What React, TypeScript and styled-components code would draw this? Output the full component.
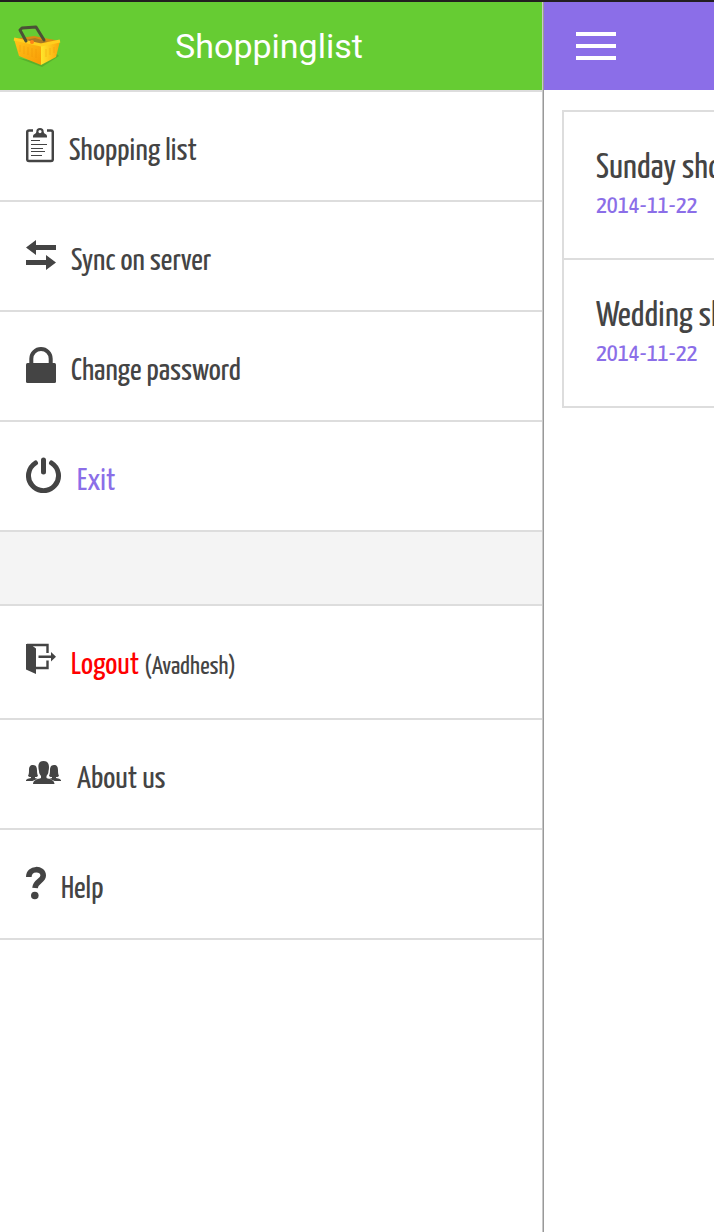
import React from "react";
import styled, { createGlobalStyle } from "styled-components";

const GlobalStyle = createGlobalStyle`
  * { box-sizing: border-box; }
  html, body, #root { height: 100%; }
  body {
    margin: 0;
    background: #fff;
    color: #444;
    font-family: "Yanone Kaffeesatz", Lato, sans-serif;
    overflow-x: hidden;
  }
`;

const Page = styled.div`
  display: grid;
  grid-template-columns: minmax(0, 16fr) minmax(0, 5fr);
  min-height: 100%;
  border-top: 2px solid #221f20;
`;

const Drawer = styled.aside`
  border-right: 1px solid #999;
  box-shadow: inset -1px 0 0 #c8c8c8;
  padding-right: 1px;
`;

const DrawerHeader = styled.header`
  display: grid;
  grid-template-columns: 52px 1fr 56px;
  align-items: center;
  height: 90px;
  padding: 0 10px;
  background: #66cc33;
  border-bottom: 2px solid #ddd;
`;

const Title = styled.h1`
  margin: 0;
  color: #fff;
  font-family: Roboto, sans-serif;
  font-size: 34px;
  font-weight: 400;
  line-height: 40px;
  text-align: center;
`;

const Menu = styled.ul`
  list-style: none;
  margin: 0;
  padding: 0;
`;

const MenuItem = styled.li`
  border-bottom: 2px solid #ddd;
`;

const Separator = styled.li`
  height: 74px;
  background: #f4f4f4;
  border-bottom: 2px solid #ddd;
`;

const MenuLink = styled.a<{ $color?: string; $tall?: boolean }>`
  display: flex;
  align-items: flex-start;
  gap: 15px;
  height: ${(p) => (p.$tall ? 112 : 108)}px;
  padding: 35px 26px;
  color: ${(p) => p.$color ?? "#444"};
  text-decoration: none;
`;

const Icon = styled.svg`
  flex: none;
  height: 36px;
  color: #444;
`;

const Label = styled.span`
  padding-top: 8px;
  font-size: 32px;
  line-height: 32px;
  white-space: nowrap;
`;

const UserName = styled.small`
  color: #444;
  font-size: 26px;
`;

const Main = styled.main`
  overflow: hidden;
`;

const MainHeader = styled.header`
  display: flex;
  align-items: center;
  height: 88px;
  padding: 0 32px;
  background: #8b6ee8;
`;

const MenuButton = styled.button`
  display: flex;
  flex-direction: column;
  gap: 8px;
  width: 40px;
  padding: 0;
  border: 0;
  background: none;
  cursor: pointer;
`;

const Bar = styled.span`
  height: 4px;
  background: #fff;
`;

const Lists = styled.ul`
  list-style: none;
  margin: 20px 0 0 18px;
  padding: 0;
  border: 2px solid #ddd;
  border-right: 0;
`;

const ListItem = styled.li`
  height: 146px;
  padding: 37px 0 0 32px;
  white-space: nowrap;

  & + & {
    height: 148px;
    border-top: 2px solid #ddd;
  }
`;

const ListName = styled.a`
  display: block;
  color: #444;
  font-size: 36px;
  line-height: 40px;
  text-decoration: none;
`;

const ListDate = styled.time`
  display: block;
  margin-top: 4px;
  color: #8b6ee8;
  font-size: 26px;
  line-height: 26px;
`;

const Basket = () => (
  <svg width="52" height="48" viewBox="0 0 52 48" aria-hidden="true">
    <defs>
      <linearGradient id="basketSide" x1="0" x2="1" y1="0" y2="1">
        <stop offset="0" stopColor="#ffc51a" />
        <stop offset="1" stopColor="#f99a05" />
      </linearGradient>
      <linearGradient id="basketEnd" x1="0" x2="1">
        <stop offset="0" stopColor="#ffe52b" />
        <stop offset="1" stopColor="#fba40a" />
      </linearGradient>
    </defs>
    <path d="M8 36 32 45 49 34 46 31 31 40z" fill="#4f9827" opacity=".55" />
    <path d="M4 17 24 14 50 19 31 25z" fill="#d98c13" />
    <path d="M15 18 25 16 38 20 29 22z" fill="#a97925" />
    <path d="M4 17 31 23 31 43 9 34z" fill="url(#basketSide)" />
    <path d="M31 23 50 19 46 35 31 43z" fill="url(#basketEnd)" />
    <path d="M4 17 31 23 50 19" fill="none" stroke="#ffcf1d" strokeWidth="3" strokeLinejoin="round" />
    <path d="M10 23v7M14 24v8M18 25v8M22 26v9M26 27v9M36 27v8M40 26v7M44 25v6" stroke="#ed9107" strokeWidth="1" opacity=".4" />
    <path d="M16 19 10 8 12 6 26 5 34 18" fill="none" stroke="#4b5136" strokeWidth="3" strokeLinejoin="round" strokeLinecap="round" />
    <circle cx="22" cy="20" r="2" fill="#ff8417" />
  </svg>
);

const ClipboardIcon = () => (
  <Icon width="28" viewBox="0 0 28 36" aria-hidden="true">
    <path d="M7 3.500H3Q1.200 3.500 1.200 5.300V32.200Q1.200 34 3 34H25Q26.800 34 26.800 32.200V5.300Q26.800 3.500 25 3.500H21" fill="none" stroke="currentColor" strokeWidth="2.500" />
    <path fillRule="evenodd" fill="currentColor" d="M7 10.500V9Q7 7.500 9 6.800Q10.300 6.200 10.300 4.800A3.700 3.700 0 0 1 17.700 4.800Q17.700 6.200 19 6.800Q21 7.500 21 9V10.500ZM14 3A1.600 1.600 0 1 0 14 6.200A1.600 1.600 0 1 0 14 3Z" />
    <path d="M5 13.500h9M5 17.500h16M5 21.500h12M5 24.500h14M5 28.500h11" stroke="currentColor" strokeWidth="1.200" />
  </Icon>
);

const SyncIcon = () => (
  <Icon width="30" viewBox="0 0 30 36" aria-hidden="true">
    <path d="M0 10.500 10 3V8H30V13H10V18ZM30 25.500 20 18V23H0V28H20V33Z" fill="currentColor" />
  </Icon>
);

const LockIcon = () => (
  <Icon width="30" viewBox="0 0 30 36" aria-hidden="true">
    <path d="M5.300 17V11.700A9.700 9.700 0 0 1 24.700 11.700V17" fill="none" stroke="currentColor" strokeWidth="4" />
    <rect y="16" width="30" height="20" rx="1.500" fill="currentColor" />
  </Icon>
);

const PowerIcon = () => (
  <Icon width="36" viewBox="0 0 36 36" aria-hidden="true">
    <path d="M9.500 6A15 15 0 1 0 25.500 6M17.500 3V15" fill="none" stroke="currentColor" strokeWidth="5" strokeLinecap="round" />
  </Icon>
);

const LogoutIcon = () => (
  <Icon width="30" viewBox="0 0 30 36" aria-hidden="true">
    <path d="M0 3H4L10 7.500V33L0 28.500Z" fill="currentColor" />
    <path d="M1 4H21.500V12M9 27H21.500V19.500M12.500 15.800H26" fill="none" stroke="currentColor" strokeWidth="2.400" />
    <path d="M25 11 30 15.800 25 20.500Z" fill="currentColor" />
  </Icon>
);

const GroupIcon = () => (
  <Icon width="36" viewBox="0 0 36 36" aria-hidden="true">
    <g fill="currentColor">
      <path d="M7 10C10.500 10 11 13 11 15.500C11 18 11.500 20 12 21C11 22 10 22 9 22V23L12 24Q8 25 6.500 26H0V25Q1 23.500 5 23V22C4 22 3 22 2 21C3 19 3 17 3 15C3 12 4 10 7 10Z" />
      <path d="M28 10C24.500 10 24 13 24 15.500C24 18 23.500 20 23 21C24 22 25 22 26 22V23L23 24Q27 25 28.500 26H35V25Q34 23.500 30 23V22C31 22 32 22 33 21C32 19 32 17 32 15C32 12 31 10 28 10Z" />
      <path d="M17.500 6C11.500 6 12 12 13 16C13 19 14.500 20 15 21V23C12 24 7 25 7 29H28.500C28.500 25 23.500 24 20.500 23V21C21 20 22.500 19 22.500 16C23.500 12 23.500 6 17.500 6Z" />
    </g>
  </Icon>
);

const HelpIcon = () => (
  <Icon width="20" viewBox="0 0 20 36" aria-hidden="true">
    <path d="M2.800 12C2.800 2.500 17.200 2.500 17.200 10.500C17.200 16 9.500 16 9 23" fill="none" stroke="currentColor" strokeWidth="5.600" />
    <circle cx="8.800" cy="30.500" r="3.800" fill="currentColor" />
  </Icon>
);

type Entry = {
  label: string;
  icon: React.ReactNode;
  color?: string;
  user?: string;
};

const actions: Entry[] = [
  { label: "Shopping list", icon: <ClipboardIcon /> },
  { label: "Sync on server", icon: <SyncIcon /> },
  { label: "Change password", icon: <LockIcon /> },
  { label: "Exit", icon: <PowerIcon />, color: "#8b6ee8" },
];

const account: Entry[] = [
  { label: "Logout", icon: <LogoutIcon />, color: "#f00", user: "Avadhesh" },
  { label: "About us", icon: <GroupIcon /> },
  { label: "Help", icon: <HelpIcon /> },
];

const shoppingLists = [
  { name: "Sunday shopping", date: "2014-11-22" },
  { name: "Wedding shopping", date: "2014-11-22" },
];

const MenuEntry = ({ label, icon, color, user }: Entry) => (
  <MenuItem>
    <MenuLink href="#" $color={color} $tall={Boolean(user)}>
      {icon}
      <Label>
        {label} {user && <UserName>({user})</UserName>}
      </Label>
    </MenuLink>
  </MenuItem>
);

export default function App() {
  return (
    <>
      <GlobalStyle />
      <Page>
        <Drawer>
          <DrawerHeader>
            <Basket />
            <Title>Shoppinglist</Title>
          </DrawerHeader>
          <nav aria-label="Main menu">
            <Menu>
              {actions.map((entry) => (
                <MenuEntry key={entry.label} {...entry} />
              ))}
              <Separator aria-hidden="true" />
              {account.map((entry) => (
                <MenuEntry key={entry.label} {...entry} />
              ))}
            </Menu>
          </nav>
        </Drawer>
        <Main>
          <MainHeader>
            <MenuButton type="button" aria-label="Toggle menu">
              <Bar />
              <Bar />
              <Bar />
            </MenuButton>
          </MainHeader>
          <Lists>
            {shoppingLists.map((list) => (
              <ListItem key={list.name}>
                <ListName href="#">{list.name}</ListName>
                <ListDate dateTime={list.date}>{list.date}</ListDate>
              </ListItem>
            ))}
          </Lists>
        </Main>
      </Page>
    </>
  );
}
